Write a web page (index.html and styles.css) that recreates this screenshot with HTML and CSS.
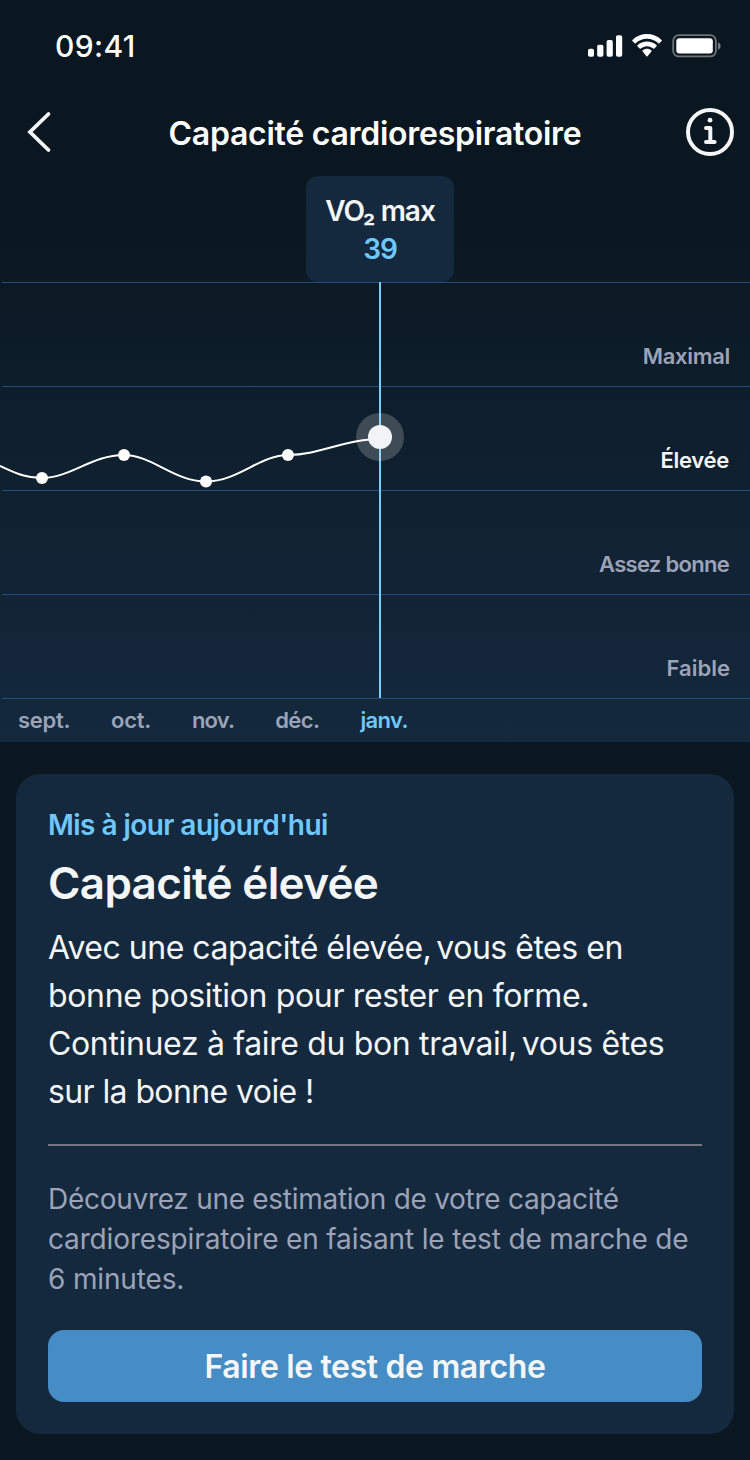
FILE: index.html
```html
<!DOCTYPE html>
<html lang="fr">
<head>
  <meta charset="UTF-8" />
  <meta name="viewport" content="width=device-width, initial-scale=1" />
  <title>Capacité cardiorespiratoire</title>
  <link rel="stylesheet" href="styles.css">
</head>
<body>
  <div class="status-bar">
    <span class="time">09:41</span>
    <svg class="status-icons" width="134" height="24" viewBox="0 0 134 24" aria-hidden="true">
      <g fill="#fff">
        <rect x="1" y="14.7" width="6" height="8" rx="1.8" />
        <rect x="10.2" y="10.7" width="6.2" height="12" rx="1.8" />
        <rect x="19.6" y="6" width="6.2" height="16.7" rx="1.8" />
        <rect x="29" y="1.3" width="6.2" height="21.4" rx="1.8" />
        <path d="M60 4.8c4.3 0 8.300 1.700 11.300 4.500.3.3.7.3 1 0l2.300-2.300c.3-.3.3-.8 0-1.100C66.500-1.900 53.500-1.900 45.400 5.900c-.3.3-.3.8 0 1.100l2.300 2.300c.3.300.7.300 1 0 3-2.800 7-4.500 11.300-4.500z" />
        <path d="M60 12.200c2.400 0 4.600.9 6.300 2.400.3.3.7.3 1 0l2.300-2.300c.3-.3.3-.8 0-1.100-5.400-5-13.800-5-19.200 0-.3.3-.3.8 0 1.100l2.300 2.300c.3.300.7.300 1 0 1.700-1.500 3.900-2.400 6.300-2.400z" />
        <path d="M64.400 17.400c.3-.3.3-.8 0-1.100-2.600-2.100-6.200-2.100-8.800 0-.3.3-.3.800 0 1.100l3.900 4.900c.3.300.7.300 1 0z" />
        <rect x="89.300" y="4.200" width="36.500" height="15.200" rx="3" />
      </g>
      <rect x="86.200" y="1.200" width="42.700" height="21.200" rx="5.500" fill="none" stroke="#fff" stroke-opacity=".4" stroke-width="1.800" />
      <path d="M131 8.200v7.600c1.600-.7 2.600-2.100 2.600-3.800s-1-3.100-2.600-3.800z" fill="#fff" fill-opacity=".45" />
    </svg>
  </div>

  <header>
    <button class="icon-btn" aria-label="Retour">
      <svg width="48" height="48" viewBox="0 0 48 48" fill="none" stroke="#f4f5f7" stroke-linecap="round">
        <path d="M32.500 6 14 24l18.500 18" stroke-width="3.800" />
      </svg>
    </button>
    <h1>Capacité cardiorespiratoire</h1>
    <button class="icon-btn" aria-label="Informations">
      <svg width="48" height="48" viewBox="0 0 48 48" fill="none" stroke="#f4f5f7" stroke-linecap="round" stroke-linejoin="round">
        <circle cx="24" cy="24" r="22" stroke-width="4" />
        <path d="M20 20H24.300V34M20 34H28.600" stroke-width="4" />
        <circle cx="24" cy="12.200" r="2.400" fill="#f4f5f7" stroke="none" />
      </svg>
    </button>
  </header>

  <section class="chart">
    <div class="tooltip">
      <span class="tooltip-label">VO₂ max</span>
      <span class="tooltip-value">39</span>
    </div>
    <div class="plot">
      <div class="level maximal">Maximal</div>
      <div class="level high active">Élevée</div>
      <div class="level fair">Assez bonne</div>
      <div class="level low">Faible</div>
      <svg class="line" width="750" height="416" viewBox="0 0 750 416">
        <path d="M0 184C14 190 24 196 42 196C70 196 92 173 124 173C152 173 174 199.500 206 199.500C238 199.500 260 173 288 173C318 173 342 159 370 157.500H380" fill="none" stroke="#fff" stroke-width="2" />
        <g fill="#fff">
          <circle cx="42" cy="196" r="6" />
          <circle cx="124" cy="173" r="6" />
          <circle cx="206" cy="199.500" r="6" />
          <circle cx="288" cy="173" r="6" />
        </g>
        <path d="M380 0V416" stroke="#74cdff" stroke-width="2" />
        <circle cx="380" cy="155" r="24" fill="#fff" fill-opacity=".2" />
        <circle cx="380" cy="155" r="12" fill="#f2f3f6" />
      </svg>
    </div>
    <div class="months">
      <span class="sept">sept.</span>
      <span class="oct">oct.</span>
      <span class="nov">nov.</span>
      <span class="dec">déc.</span>
      <span class="current">janv.</span>
    </div>
  </section>

  <section class="card">
    <p class="updated">Mis à jour aujourd'hui</p>
    <h2>Capacité élevée</h2>
    <p class="summary">
      <span>Avec une capacité élevée,<i> </i>vous êtes en</span>
      <span>bonne position pour rester en forme.</span>
      <span>Continuez à faire du bon travail,<i> </i>vous êtes</span>
      <span>sur la bonne voie !</span>
    </p>
    <p class="hint">
      <span>Découvrez une estimation de votre capacité</span>
      <span>cardiorespiratoire en faisant le test de marche de</span>
      <span>6 minutes.</span>
    </p>
    <button class="primary">Faire le test de marche</button>
  </section>
</body>
</html>
```
FILE: styles.css
```css
* {
  box-sizing: border-box;
}
body {
  margin: 0;
  width: 750px;
  height: 1460px;
  overflow: hidden;
  background: #0a1620;
  color: #f4f5f7;
  font-family: Inter, "Liberation Sans", sans-serif;
  white-space: nowrap;
}
h1, h2, p {
  margin: 0;
}
button {
  border: none;
  padding: 0;
  background: none;
  color: inherit;
  font-family: inherit;
  cursor: pointer;
}
svg {
  display: block;
}

/* Status bar */
.status-bar {
  height: 88px;
  padding: 4px 29px 0 55px;
  display: flex;
  align-items: center;
  justify-content: space-between;
}
.time {
  font-size: 30px;
  font-weight: 500;
  letter-spacing: 0.4px;
  color: #fff;
}

/* Header */
header {
  height: 88px;
  padding: 0 16px;
  display: flex;
  align-items: center;
  justify-content: space-between;
}
h1 {
  padding-top: 2px;
  font-size: 32px;
  font-weight: 600;
  letter-spacing: -0.27px;
  color: #fff;
}

/* Chart */
.chart {
  height: 566px;
  background: linear-gradient(#0a1620, #14293d);
}
.tooltip {
  width: 148px;
  height: 106px;
  margin-left: 306px;
  padding-top: 16px;
  border-radius: 12px;
  background: #14293d;
  text-align: center;
  font-size: 28px;
  font-weight: 600;
  line-height: 38px;
}
.tooltip span {
  display: block;
}
.tooltip-label {
  letter-spacing: -1px;
}
.tooltip-value {
  letter-spacing: -1px;
  color: #6fc8ff;
}
.plot {
  position: relative;
  padding-left: 2px;
}
.level {
  height: 104px;
  padding: 59px 20px 0 0;
  border-top: 1px solid #284a7a;
  text-align: right;
  font-size: 22px;
  font-weight: 600;
  line-height: 28px;
  color: #9ca3b8;
}
.level.maximal {
  letter-spacing: -0.3px;
}
.level.high {
  padding-right: 21px;
  letter-spacing: -0.3px;
}
.level.fair {
  padding-right: 21px;
  letter-spacing: -0.7px;
}
.level.active {
  color: #f4f5f7;
}
.line {
  position: absolute;
  left: 0;
  top: 0;
}
.months {
  margin-left: 2px;
  padding: 7px 0 0 16px;
  border-top: 1px solid #284a7a;
  display: flex;
  gap: 41px;
  font-size: 22px;
  font-weight: 600;
  line-height: 28px;
  color: #9ca3b8;
}
.months .sept,
.months .oct {
  letter-spacing: -0.3px;
}
.months .nov {
  letter-spacing: -0.8px;
}
.months .dec,
.months .current {
  letter-spacing: -0.6px;
}
.months .current {
  color: #6fc8ff;
}

/* Result card */
.card {
  height: 660px;
  margin: 32px 16px 0;
  padding: 32px;
  border-radius: 24px;
  background: #14293d;
}
.updated {
  font-size: 28px;
  font-weight: 600;
  line-height: 38px;
  letter-spacing: -0.55px;
  color: #6fc8ff;
}
h2 {
  margin-top: 10px;
  font-size: 44px;
  font-weight: 600;
  line-height: 58px;
  letter-spacing: -0.65px;
}
.summary span,
.hint span {
  display: block;
}
.summary {
  margin-top: 12px;
  padding-bottom: 28px;
  border-bottom: 2px solid #737581;
  font-size: 32px;
  line-height: 48px;
  letter-spacing: -0.35px;
}
/* tighter space after a comma */
.summary i {
  letter-spacing: -4px;
}
.summary span:nth-child(1) {
  letter-spacing: -0.48px;
}
.summary span:nth-child(4) {
  letter-spacing: -0.6px;
}
.hint {
  margin-top: 33px;
  font-size: 28px;
  line-height: 40px;
  letter-spacing: -0.15px;
  color: #9ca3b8;
}
.hint span:nth-child(1) {
  letter-spacing: -0.28px;
}
.primary {
  display: block;
  width: 654px;
  height: 72px;
  margin-top: 31px;
  border-radius: 16px;
  background: #458dc4;
  font-size: 32px;
  font-weight: 600;
  letter-spacing: -0.36px;
}
```
